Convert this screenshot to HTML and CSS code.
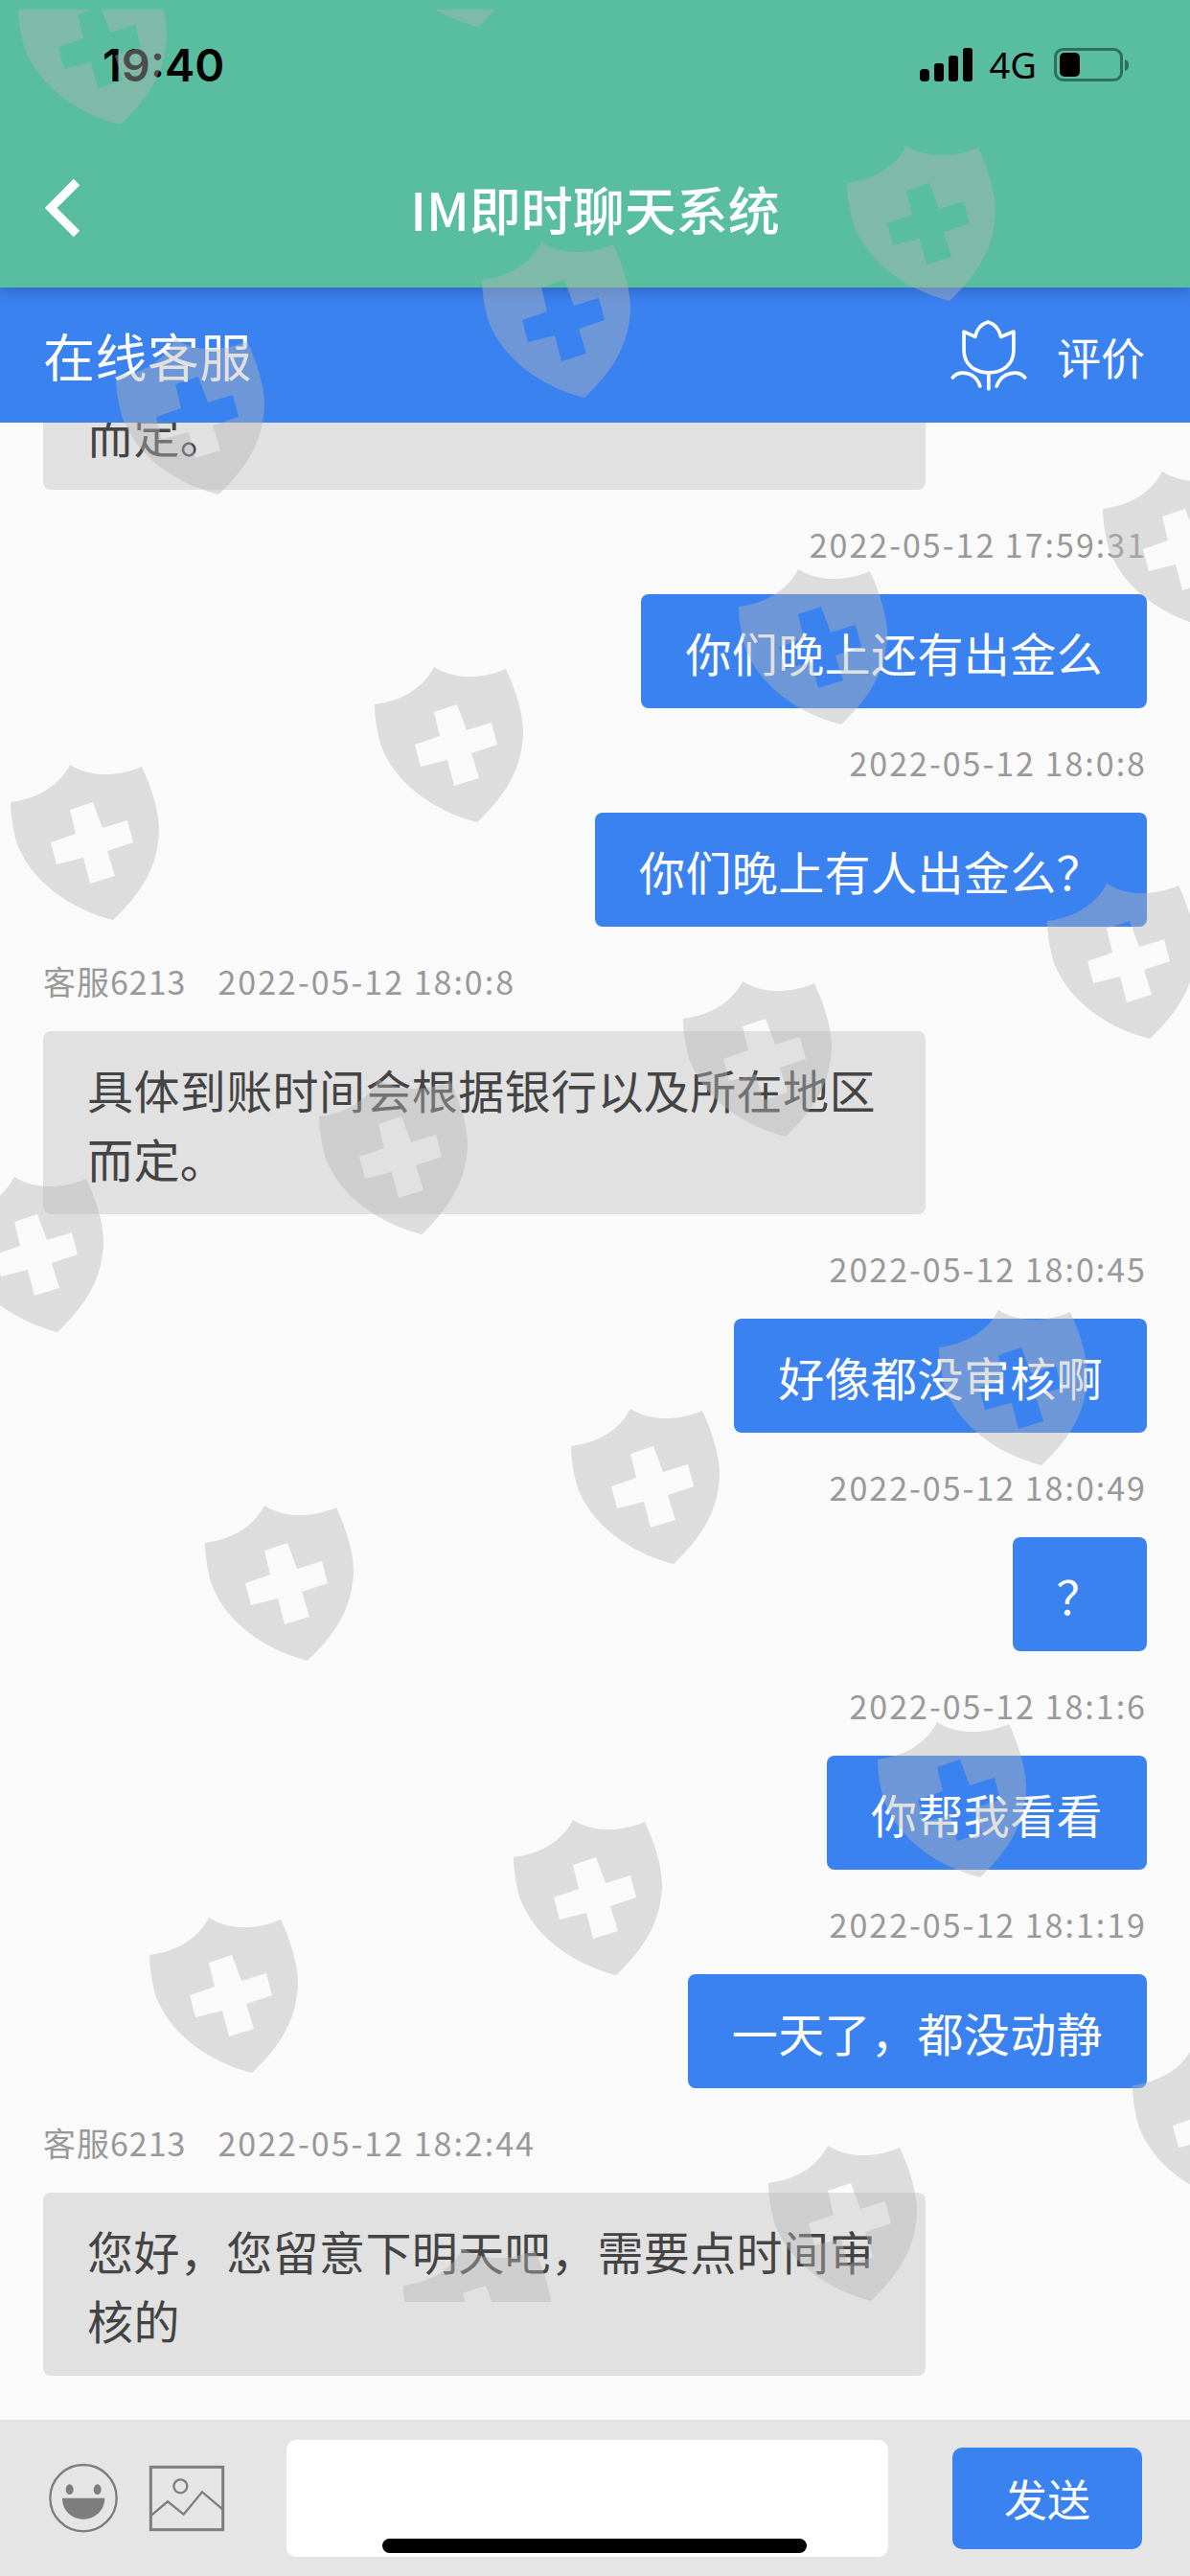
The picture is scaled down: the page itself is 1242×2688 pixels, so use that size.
FILE: index.html
```html
<!DOCTYPE html>
<html lang="zh-CN">
<head>
<meta charset="utf-8">
<title>IM即时聊天系统</title>
<link rel="stylesheet" href="styles.css">
</head>
<body>
<div class="page">
  <header class="app-header">
    <div class="status-bar">
      <span class="clock">19:40</span>
      <div class="status-icons">
        <svg class="signal" viewBox="0 0 55 35" aria-hidden="true">
          <rect x="0" y="22" width="10" height="13" rx="4"/>
          <rect x="15" y="16" width="10" height="19" rx="3"/>
          <rect x="30" y="8" width="10" height="27" rx="3"/>
          <rect x="45" y="0" width="10" height="35" rx="3"/>
        </svg>
        <span class="network">4G</span>
        <svg class="battery" viewBox="0 0 78 35" aria-hidden="true">
          <rect class="battery-case" x="1.5" y="1.5" width="69" height="32" rx="8"/>
          <rect x="6" y="5" width="21" height="25" rx="5"/>
          <path class="battery-nub" d="M74 12c3 1 4 3 4 6s-1 5-4 6z"/>
        </svg>
      </div>
    </div>
    <nav class="nav-bar">
      <svg class="back" viewBox="0 0 40 62" aria-hidden="true">
        <path d="M33 4 6 31l27 27"/>
      </svg>
      <h1 class="nav-title">IM即时聊天系统</h1>
    </nav>
  </header>

  <div class="service-bar">
    <span class="service-name">在线客服</span>
    <div class="rate">
      <svg class="tulip" viewBox="85 70 245 230" aria-hidden="true">
        <path d="M205 82C185 88 170 105 165 128L130 112V170C130 215 165 240 207 240C250 240 285 215 285 170V112L245 128C240 105 225 88 205 82Z"/>
        <path d="M207 240V290M95 255C115 232 165 235 180 282M320 255C300 232 250 235 232 282"/>
      </svg>
      <span class="rate-label">评价</span>
    </div>
  </div>

  <main class="chat">
    <div class="msg in">
      <div class="bubble">具体到账时间会根据银行以及所在地区而定。</div>
    </div>
    <div class="msg out">
      <div class="meta">2022-05-12 17:59:31</div>
      <div class="bubble">你们晚上还有出金么</div>
    </div>
    <div class="msg out">
      <div class="meta">2022-05-12 18:0:8</div>
      <div class="bubble">你们晚上有人出金么？</div>
    </div>
    <div class="msg in">
      <div class="meta"><span class="agent">客服6213</span>2022-05-12 18:0:8</div>
      <div class="bubble">具体到账时间会根据银行以及所在地区而定。</div>
    </div>
    <div class="msg out">
      <div class="meta">2022-05-12 18:0:45</div>
      <div class="bubble">好像都没审核啊</div>
    </div>
    <div class="msg out">
      <div class="meta">2022-05-12 18:0:49</div>
      <div class="bubble">？</div>
    </div>
    <div class="msg out">
      <div class="meta">2022-05-12 18:1:6</div>
      <div class="bubble">你帮我看看</div>
    </div>
    <div class="msg out">
      <div class="meta">2022-05-12 18:1:19</div>
      <div class="bubble">一天了，都没动静</div>
    </div>
    <div class="msg in">
      <div class="meta"><span class="agent">客服6213</span>2022-05-12 18:2:44</div>
      <div class="bubble">您好，您留意下明天吧，需要点时间审核的</div>
    </div>
  </main>

  <footer class="composer">
    <svg class="emoji" viewBox="60 90 222 222" aria-hidden="true">
      <circle class="line" cx="171" cy="200" r="104"/>
      <ellipse cx="128" cy="173" rx="12" ry="16"/>
      <ellipse cx="215" cy="173" rx="12" ry="16"/>
      <path d="M105 200H238C238 240 205 266 172 266C135 266 105 240 105 200Z"/>
    </svg>
    <svg class="picture" viewBox="375 95 240 210" aria-hidden="true">
      <rect class="line frame" x="382" y="102" width="226" height="196"/>
      <circle class="line" cx="475" cy="162" r="21"/>
      <path class="line" d="M385 252 435 210 485 250 543 180 607 234"/>
    </svg>
    <div class="input"></div>
    <button class="send" type="button">发送</button>
  </footer>

  <div class="home-indicator"></div>

  <!-- Repeating shield watermark laid over the whole app -->
  <svg class="watermark" viewBox="0 10 1242 2392" aria-hidden="true">
    <defs>
      <symbol id="shield" viewBox="0 0 156 164" width="156" height="164">
        <path fill-rule="evenodd" d="M0 39C25 36 50 24 62 0C80 12 110 14 137 2C150 30 158 60 154 80C150 115 130 140 107 162C60 150 20 120 6 80C2 65 0 50 0 39ZM62 47 86 39 96 66 122 58 128 81 101 90 109 116 83 124 76 97 48 104 42 81 68 72Z"/>
      </symbol>
    </defs>
    <use href="#shield" x="19" y="-32"/>
    <use href="#shield" x="392" y="-134"/>
    <use href="#shield" x="884" y="152"/>
    <use href="#shield" x="503" y="253"/>
    <use href="#shield" x="121" y="354"/>
    <use href="#shield" x="1151" y="492"/>
    <use href="#shield" x="771" y="594"/>
    <use href="#shield" x="391" y="696"/>
    <use href="#shield" x="11" y="798"/>
    <use href="#shield" x="1093" y="922"/>
    <use href="#shield" x="713" y="1024"/>
    <use href="#shield" x="333" y="1126"/>
    <use href="#shield" x="-47" y="1228"/>
    <use href="#shield" x="980" y="1367"/>
    <use href="#shield" x="596" y="1470"/>
    <use href="#shield" x="214" y="1571"/>
    <use href="#shield" x="916" y="1797"/>
    <use href="#shield" x="536" y="1899"/>
    <use href="#shield" x="156" y="2001"/>
    <use href="#shield" x="1182" y="2137"/>
    <use href="#shield" x="802" y="2239"/>
    <use href="#shield" x="421" y="2346"/>
  </svg>
</div>
</body>
</html>
```
FILE: styles.css
```css
* {
  box-sizing: border-box;
}

html,
body {
  margin: 0;
  padding: 0;
}

body {
  font-family: "Noto Sans CJK SC", "Noto Sans", sans-serif;
  background: #fafafa;
}

.page {
  position: relative;
  display: flex;
  flex-direction: column;
  width: 1242px;
  height: 2688px;
  overflow: hidden;
  background: #fafafa;
}

/* Green app header */
.app-header {
  position: relative;
  z-index: 2;
  flex: none;
  height: 300px;
  background: #59bea0;
  box-shadow: 0 4px 14px rgba(0, 0, 0, 0.22);
}

.status-bar {
  display: flex;
  align-items: center;
  justify-content: space-between;
  height: 134px;
  padding: 0 64px 0 107px;
}

.clock {
  font-family: Inter, sans-serif;
  font-size: 47px;
  font-weight: 600;
  color: #000;
}

.status-icons {
  display: flex;
  align-items: center;
  gap: 18px;
}

.signal {
  width: 55px;
  height: 35px;
  fill: #000;
}

.network {
  font-family: "Noto Sans", sans-serif;
  font-size: 38px;
  line-height: 35px;
  color: #000;
}

.battery {
  width: 78px;
  height: 35px;
  fill: #000;
}

.battery-case {
  fill: none;
  stroke: #2f6f5e;
  stroke-width: 3;
}

.battery-nub {
  fill: #2f6f5e;
}

.nav-bar {
  display: grid;
  grid-template-columns: 1fr auto 1fr;
  align-items: center;
  height: 166px;
  padding-left: 47px;
}

.back {
  width: 40px;
  height: 62px;
  fill: none;
  stroke: #fff;
  stroke-width: 9;
}

.nav-title {
  margin: 0 47px 0 0;
  font-size: 54px;
  font-weight: 500;
  color: #fff;
  white-space: nowrap;
}

/* Blue service bar */
.service-bar {
  position: relative;
  z-index: 1;
  flex: none;
  display: flex;
  align-items: center;
  justify-content: space-between;
  height: 141px;
  padding: 0 47px 0 45px;
  background: #3b82f1;
  color: #fff;
}

.service-name {
  font-size: 54px;
  letter-spacing: 0.5px;
}

.rate {
  display: flex;
  align-items: center;
  gap: 30px;
}

.tulip {
  width: 82px;
  height: 77px;
  fill: none;
  stroke: #fff;
  stroke-width: 11;
  stroke-linejoin: round;
  stroke-linecap: round;
}

.rate-label {
  font-size: 46px;
}

/* Conversation */
.chat {
  flex: 1;
  min-height: 0;
  display: flex;
  flex-direction: column;
  justify-content: flex-end;
  overflow: hidden;
  padding: 0 45px 46px;
}

.msg {
  flex: none;
  display: flex;
  flex-direction: column;
  margin-top: 37px;
}

.msg.out {
  align-items: flex-end;
}

.msg.in {
  align-items: flex-start;
}

.meta {
  height: 40px;
  margin-bottom: 32px;
  font-size: 34px;
  line-height: 40px;
  letter-spacing: 2px;
  color: #999;
  white-space: nowrap;
}

.agent {
  margin-right: 33px;
  letter-spacing: 1px;
}

.bubble {
  max-width: 921px;
  padding: 24px 46px 23px;
  border-radius: 8px;
  font-size: 48px;
  line-height: 72px;
  letter-spacing: 0.4px;
}

.msg.out .bubble {
  background: #3b82f1;
  color: #fff;
}

.msg.in .bubble {
  background: #e1e1e1;
  color: #444;
}

/* Message composer */
.composer {
  flex: none;
  display: flex;
  align-items: center;
  height: 163px;
  padding: 0 50px;
  background: #e5e5e5;
}

.emoji {
  flex: none;
  width: 74px;
  height: 74px;
  fill: #7d7d7d;
}

.picture {
  flex: none;
  width: 80px;
  height: 70px;
  margin-left: 31px;
}

.line {
  fill: none;
  stroke: #7d7d7d;
  stroke-width: 7;
}

.frame {
  stroke-width: 9;
}

.input {
  flex: none;
  width: 628px;
  height: 122px;
  margin-left: 64px;
  border-radius: 10px;
  background: #fff;
}

.send {
  flex: none;
  width: 198px;
  height: 106px;
  margin-left: 67px;
  padding: 0;
  border: 0;
  border-radius: 10px;
  background: #3b82f1;
  color: #fff;
  font-family: inherit;
  font-size: 45px;
}

.home-indicator {
  position: absolute;
  left: 399px;
  top: 2649px;
  width: 443px;
  height: 15px;
  border-radius: 8px;
  background: #000;
}

.watermark {
  position: absolute;
  z-index: 5;
  left: 0;
  top: 10px;
  width: 1242px;
  height: 2392px;
  fill: rgba(180, 180, 180, 0.42);
  pointer-events: none;
}
```
